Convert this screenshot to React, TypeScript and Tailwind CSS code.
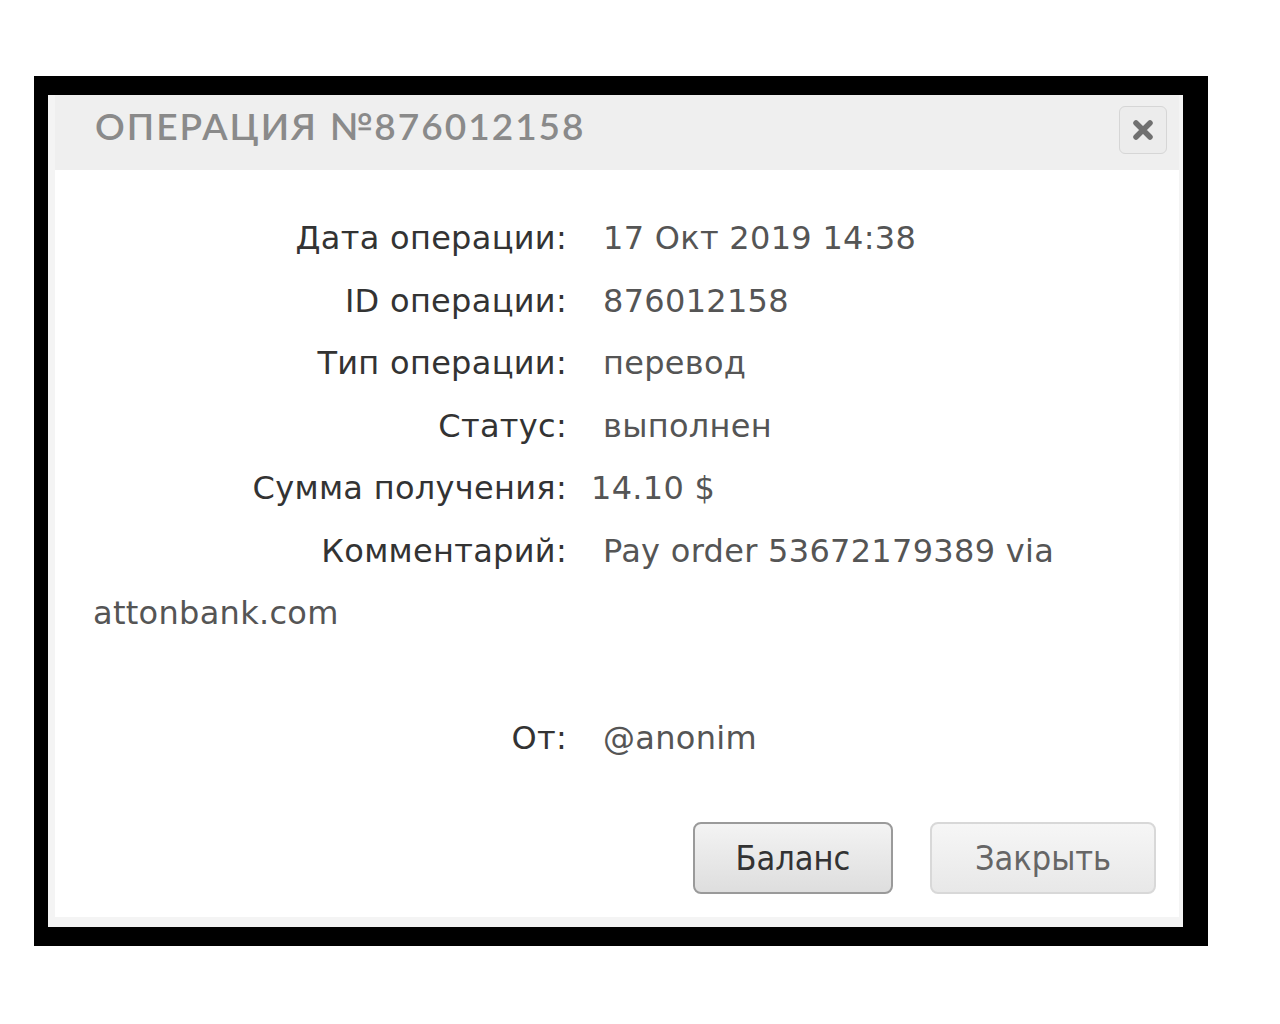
import React from "react";

const rows: { label: string; value: string; shift?: boolean }[] = [
  { label: "Дата операции:", value: "17 Окт 2019 14:38" },
  { label: "ID операции:", value: "876012158" },
  { label: "Тип операции:", value: "перевод" },
  { label: "Статус:", value: "выполнен" },
  { label: "Сумма получения:", value: "14.10 $", shift: true },
  { label: "Комментарий:", value: "Pay order 53672179389 via" },
];

const App = () => {
  return (
    <div className="min-h-[1024px] w-[1280px] bg-white pt-[76px] pl-[34px]">
      <div className="w-[1174px] bg-black pt-[19px] pb-[19px] pl-[14px] pr-[25px]">
        <div className="flex h-[832px] flex-col bg-[#f4f4f4] pl-[7px] pr-[4px] pb-[10px]">
          <div className="flex h-[75px] items-center justify-between bg-[#efefef] pb-[14px] pl-[40px] pr-[12px]">
            <h1
              className="text-[37px] font-semibold tracking-[2px] text-[#8a8a8a]"
              style={{ fontFamily: "Lato, sans-serif" }}
            >
              ОПЕРАЦИЯ №876012158
            </h1>
            <button className="mt-[8px] flex h-[48px] w-[48px] items-center justify-center rounded-[6px] border border-[#d6d6d6] bg-[#ececec]">
              <svg width="22" height="22" viewBox="0 0 22 22">
                <path d="M4 4 L18 18 M18 4 L4 18" stroke="#707070" strokeWidth="5.5" strokeLinecap="round" />
              </svg>
            </button>
          </div>

          <div
            className="flex flex-1 flex-col bg-white pl-[38px] pt-[37px] text-[32px] tracking-[0.3px]"
            style={{ fontFamily: "'DejaVu Sans', sans-serif" }}
          >
            {rows.map((r) => (
              <div key={r.label} className="leading-[62.5px]">
                <span
                  className={`inline-block w-[474px] text-right text-[#333] ${r.shift ? "mr-[24px]" : "mr-[36px]"}`}
                >
                  {r.label}
                </span>
                <span className="text-[#555]">{r.value}</span>
              </div>
            ))}
            {/* comment wraps back to the left edge */}
            <div className="leading-[62.5px] text-[#555]">attonbank.com</div>
            <div className="mt-[62px] leading-[62.5px]">
              <span className="mr-[36px] inline-block w-[474px] text-right text-[#333]">От:</span>
              <span className="text-[#555]">@anonim</span>
            </div>

            <div
              className="mt-auto mb-[23px] flex justify-end gap-[37px] pr-[23px] tracking-normal"
              style={{ fontFamily: "'DejaVu Sans Condensed', 'DejaVu Sans', sans-serif" }}
            >
              <button className="h-[72px] w-[200px] rounded-[8px] border-2 border-[#9a9a9a] bg-gradient-to-b from-[#f3f3f3] to-[#dedede] text-[34px] text-[#333]">
                Баланс
              </button>
              <button className="h-[72px] w-[226px] rounded-[8px] border-2 border-[#d8d8d8] bg-gradient-to-b from-[#f6f6f6] to-[#e8e8e8] text-[34px] text-[#666]">
                Закрыть
              </button>
            </div>
          </div>
        </div>
      </div>
    </div>
  );
};

export default App;
